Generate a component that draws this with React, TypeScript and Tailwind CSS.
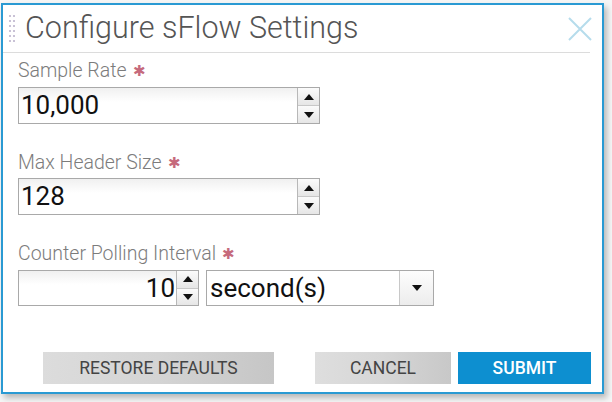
const Req = () => <span className="ml-[6px] text-[15px] text-[#c66a7c]">✱</span>;

const Spinner = () => (
  <div className="flex w-[22px] flex-col border-l border-[#b8b8b8]">
    <div className="flex flex-1 items-center justify-center border-b border-[#c8c8c8] bg-gradient-to-b from-[#fbfbfb] to-[#e6e6e6]">
      <svg width="10" height="6" viewBox="0 0 10 6"><path d="M0 6 L5 0 L10 6 Z" fill="#111" /></svg>
    </div>
    <div className="flex flex-1 items-center justify-center bg-gradient-to-b from-[#fbfbfb] to-[#e6e6e6]">
      <svg width="10" height="6" viewBox="0 0 10 6"><path d="M0 0 L5 6 L10 0 Z" fill="#111" /></svg>
    </div>
  </div>
);

const NumberField = ({ value }: { value: string }) => (
  <div className="flex h-[37px] w-[302px] border border-[#a9a9a9] bg-white">
    <div className="flex flex-1 items-center bg-gradient-to-b from-[#f0f0f0] to-white to-40% pl-[2px] text-[26px] text-[#111]">
      {value}
    </div>
    <Spinner />
  </div>
);

const Label = ({ children }: { children: string }) => (
  <div className="flex items-center text-[19.5px] font-light leading-[22px] text-[#7c7c7c]">
    {children}
    <Req />
  </div>
);

export default function App() {
  return (
    <div className="h-[402px] w-[612px] bg-[#f6f6f6] pl-[1px] pt-[3px]" style={{ fontFamily: 'Roboto, "Liberation Sans", sans-serif' }}>
      <div className="flex h-[391px] w-[603px] flex-col border-2 border-[#2a9ad3] bg-white shadow-[3px_4px_6px_rgba(0,0,0,0.25)]">
        {/* header */}
        <div className="mr-[12px] flex h-[48px] items-center border-b border-[#dcdcdc]">
          <div className="ml-[6px] grid grid-cols-2 gap-x-[2px] gap-y-[3px]">
            {Array.from({ length: 12 }).map((_, i) => (
              <span key={i} className="h-[2px] w-[2px] bg-[#c9c2d6]" />
            ))}
          </div>
          <h1 className="ml-[10px] flex-1 text-[30.5px] font-light leading-none text-[#555]">Configure sFlow Settings</h1>
          <svg width="24" height="24" viewBox="0 0 24 24" className="mr-[-2px]">
            <path d="M1 1 L23 23 M23 1 L1 23" stroke="#b6dcec" strokeWidth="2" />
          </svg>
        </div>

        <div className="flex flex-1 flex-col pl-[15px] pt-[7px]">
          <Label>Sample Rate</Label>
          <div className="mt-[5px]"><NumberField value="10,000" /></div>

          <div className="mt-[28px]"><Label>Max Header Size</Label></div>
          <div className="mt-[4px]"><NumberField value="128" /></div>

          <div className="mt-[28px]"><Label>Counter Polling Interval</Label></div>
          <div className="mt-[5px] flex gap-[7px]">
            <div className="flex h-[36px] w-[181px] border border-[#a9a9a9] bg-white">
              <div className="flex flex-1 items-center justify-end bg-gradient-to-b from-[#f0f0f0] to-white to-40% pr-[1px] text-[26px] text-[#111]">10</div>
              <Spinner />
            </div>
            <div className="flex h-[36px] w-[228px] border border-[#a9a9a9] bg-white">
              <div className="flex flex-1 items-center pl-[3px] text-[26px] text-[#111]">second(s)</div>
              <div className="flex w-[34px] items-center justify-center border-l border-[#c8c8c8] bg-gradient-to-b from-[#fdfdfd] to-[#ececec]">
                <svg width="10" height="6" viewBox="0 0 10 6"><path d="M0 0 L5 6 L10 0 Z" fill="#111" /></svg>
              </div>
            </div>
          </div>
        </div>

        {/* footer */}
        <div className="mb-[8px] flex items-center pl-[40px] pr-[11px]">
          <button className="h-[32px] w-[231px] bg-gradient-to-r from-[#dcdcdc] via-[#d4d4d4] to-[#c6c6c6] text-[17.5px] text-[#444]">RESTORE DEFAULTS</button>
          <div className="flex-1" />
          <button className="h-[32px] w-[136px] bg-gradient-to-r from-[#dedede] via-[#d6d6d6] to-[#c8c8c8] text-[17.5px] text-[#444]">CANCEL</button>
          <button className="ml-[7px] h-[32px] w-[133px] bg-[#0d8fd0] text-[17.5px] font-medium text-white">SUBMIT</button>
        </div>
      </div>
    </div>
  );
}
